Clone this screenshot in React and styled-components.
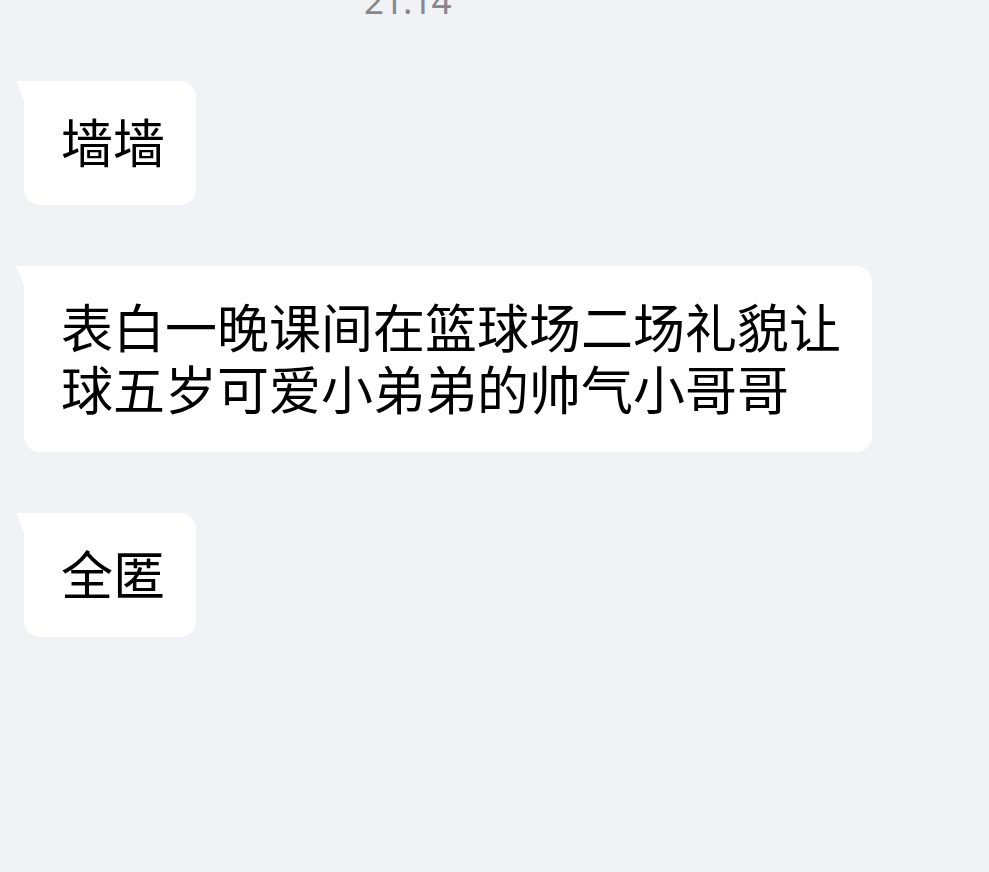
import styled, { createGlobalStyle } from 'styled-components';

const GlobalStyle = createGlobalStyle`
    html, body {
        margin: 0;
        padding: 0;
        background: #f1f2f6;
    }
    body {
        font-family: "Noto Sans", "Noto Sans CJK SC", sans-serif;
        overflow: hidden;
    }
`;

const Page = styled.div`
    width: 989px;
    height: 872px;
    background: #f1f2f6;
    overflow: hidden;
    display: flex;
    flex-direction: column;
    align-items: flex-start;
    padding-left: 24px;
    box-sizing: border-box;
`;

const Time = styled.div`
    align-self: stretch;
    margin: -17px 0 0 -24px;
    padding-right: 174px;
    height: 35px;
    line-height: 35px;
    font-size: 35px;
    text-align: center;
    color: #86868c;
    font-family: "Noto Sans", sans-serif;
    letter-spacing: -0.5px;
`;

const List = styled.div`
    display: flex;
    flex-direction: column;
    align-items: flex-start;
    gap: 61px;
    margin-top: 63px;
`;

const Bubble = styled.div`
    position: relative;
    background: #ffffff;
    color: #000;
    font-family: "Noto Sans CJK SC", "Noto Sans", sans-serif;
    font-size: 52px;
    line-height: 62px;
    padding: 29px 31px 33px 37px;
    border-radius: 0 16px 16px 16px;
    max-width: ${p => p.$wide ? '780px' : 'none'};

    &::before {
        content: '';
        position: absolute;
        left: -8px;
        top: 0;
        width: 9px;
        height: 26px;
        background: #ffffff;
        clip-path: path('M0 0 H9 V26 Q6 10 0 0 Z');
    }
`;

const messages = [
    { text: '墙墙' },
    { text: '表白一晚课间在篮球场二场礼貌让球五岁可爱小弟弟的帅气小哥哥', wide: true },
    { text: '全匿' },
];

export default function App() {
    return (
        <Page>
            <GlobalStyle />
            <Time>21:14</Time>
            <List>
                {messages.map((m, i) => (
                    <Bubble key={i} $wide={m.wide}>{m.text}</Bubble>
                ))}
            </List>
        </Page>
    );
}
